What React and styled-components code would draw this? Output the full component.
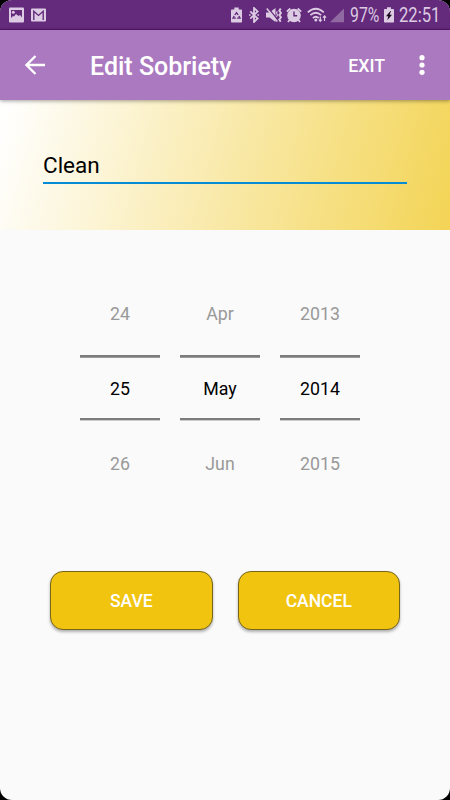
import React from "react";
import styled, { createGlobalStyle } from "styled-components";

const GlobalStyle = createGlobalStyle`
  * { box-sizing: border-box; }
  body { margin: 0; background: #000; font-family: Roboto, "Liberation Sans", sans-serif; }
`;

const Screen = styled.main`
  width: 450px;
  height: 800px;
  display: flex;
  flex-direction: column;
  overflow: hidden;
  border-radius: 12px;
  background: #fafafa;
`;

const StatusBar = styled.div`
  height: 30px;
  flex: none;
  display: flex;
  align-items: center;
  padding: 0 10px 0 9px;
  background: #642a7b;
  border-bottom: 1px solid #571468;
  color: #dccbe3;
`;

const Glyph = styled.svg`
  display: block;
  flex: none;
  width: ${(p) => p.$w}px;
  height: 16px;
  margin-left: ${(p) => p.$gap || 0}px;
`;

const Spacer = styled.div`
  flex: 1;
`;

const StatusText = styled.span`
  width: ${(p) => p.$w}px;
  margin-left: ${(p) => p.$gap}px;
  font-size: 20px;
  line-height: 28px;
  padding-top: 1px;
  white-space: nowrap;
  transform: scaleX(${(p) => p.$scale});
  transform-origin: left center;
`;

const AppBar = styled.header`
  height: 70px;
  flex: none;
  z-index: 1;
  display: flex;
  align-items: center;
  padding: 0 25px;
  background: #ab79bf;
  color: #fff;
  box-shadow: 0 1px 4px rgba(0, 0, 0, 0.38);
`;

const IconButton = styled.button`
  display: flex;
  padding: 0;
  border: 0;
  background: none;
  color: inherit;
`;

const Title = styled.h1`
  flex: 1;
  margin: 3px 0 0 45px;
  font-size: 25px;
  line-height: 30px;
  font-weight: 500;
`;

const ExitButton = styled.button`
  margin-right: 34px;
  padding: 2px 0 0;
  border: 0;
  background: none;
  color: inherit;
  font: 500 17.75px/22px Roboto, sans-serif;
`;

const NamePanel = styled.section`
  height: 130px;
  flex: none;
  padding: 46px 43px 0;
  background: linear-gradient(105deg, #fff 1%, #f3d455 100%);
`;

const NameInput = styled.input`
  display: block;
  width: 100%;
  height: 38px;
  padding: 2px 0 0;
  border: 0;
  border-bottom: 2px solid #068cd5;
  outline: 0;
  border-radius: 0;
  background: none;
  color: #000;
  font: 400 22.5px/34px Roboto, sans-serif;
`;

const DatePicker = styled.section`
  display: flex;
  padding-left: 80px;
  gap: 20px;
  margin-top: 46px;
`;

const Wheel = styled.div`
  width: 80px;
  display: flex;
  flex-direction: column;
  text-align: center;
  font-size: 17.75px;
`;

const Neighbour = styled.div`
  height: 79px;
  line-height: ${(p) => (p.$below ? "89px" : "76px")};
  color: #999;
`;

const Chosen = styled.div`
  height: 65px;
  border-top: 2px solid #7c7c7c;
  border-bottom: 2px solid #7c7c7c;
  box-shadow: inset 0 1px #9a9a9a, 0 1px #cdcdcd;
  line-height: 64px;
  color: #000;
`;

const Actions = styled.section`
  display: flex;
  padding-left: 50px;
  gap: 25px;
  margin-top: 72px;
`;

const ActionButton = styled.button`
  width: 162.5px;
  height: 59px;
  padding: 1px 0 0;
  border: 1px solid #76651b;
  border-radius: 13px;
  background: #f1c40f;
  box-shadow: 0 2px 3px rgba(0, 0, 0, 0.3);
  color: #fff;
  font: 500 17.5px/22px Roboto, sans-serif;
`;

const PictureIcon = () => (
  <Glyph $w={15} viewBox="0 0 15 16">
    <rect y=".5" width="15" height="15" rx="1" fill="currentColor" />
    <path d="M2 3h11v7.5l-2-2.5-1.500 1-2.500-2-2 2.500-1-.5-2 2Z" fill="#642a7b" />
    <circle cx="4.300" cy="5.200" r="1.500" fill="currentColor" />
  </Glyph>
);

const MailIcon = () => (
  <Glyph $w={15} $gap={7} viewBox="0 0 15 16">
    <rect y="1.500" width="15" height="13" rx="1" fill="currentColor" />
    <path d="M2.800 13V4.200l4.700 4.200 4.700-4.200V13" fill="none" stroke="#642a7b" strokeWidth="1.400" />
  </Glyph>
);

const RecycleBatteryIcon = () => (
  <Glyph $w={11} viewBox="0 0 10 16" preserveAspectRatio="none">
    <path d="M3 .5h4v2h2.200q.8 0 .8.800v11.400q0 .8-.8.800H.8q-.8 0-.8-.8V3.300q0-.8.800-.8H3Z" fill="currentColor" />
    <path d="M3.500 8 5 5.700 6.500 8M7.200 9l1 2.200H5.600M4.400 11.200H1.900l1-2.200" fill="none" stroke="#642a7b" strokeWidth="1.300" />
  </Glyph>
);

const BluetoothIcon = () => (
  <Glyph $w={10} $gap={6.5} viewBox="0 0 10 16">
    <path d="m1.300 4.300 7.300 7.300L5 15V1l3.600 3.400-7.300 7.300" fill="none" stroke="currentColor" strokeWidth="1.800" />
    <path d="M0 7.200h1.600v1.600H0zM8.400 7.200H10v1.600H8.400z" fill="currentColor" />
  </Glyph>
);

const MuteVibrateIcon = () => (
  <Glyph $w={16} $gap={7} viewBox="0 0 16 16">
    <path d="M0 5.500h3.500L9.500 1v14l-6-4.500H0Z" fill="currentColor" />
    <path d="m2.500 1.500 9 11" stroke="#642a7b" strokeWidth="1.300" />
    <path d="m.8 1.500 10.500 13" stroke="currentColor" strokeWidth="1.500" />
    <path d="M14.700 1.500 13.300 3.700l1.700 2.200-1.700 2.200 1.700 2.200-1.700 2.200 1.400 2.200" fill="none" stroke="currentColor" strokeWidth="1.900" />
    <path d="m11.300 4.200-.8 1.700 1 2-1 2" fill="none" stroke="currentColor" strokeWidth="1.100" />
  </Glyph>
);

const AlarmIcon = () => (
  <Glyph $w={16} $gap={4.5} viewBox="0 0 16 16">
    <circle cx="8" cy="8.500" r="6.800" fill="currentColor" />
    <path d="M.8 4.600 4.300 1.500M11.700 1.500l3.500 3.100M3.500 13 2 15M12.500 13l1.500 2" stroke="currentColor" strokeWidth="1.800" />
    <path d="M8 4.500v4.300h3.200" fill="none" stroke="#642a7b" strokeWidth="1.400" />
  </Glyph>
);

const WifiIcon = () => (
  <Glyph $w={20} $gap={4.5} viewBox="0 0 20 16">
    <path d="M.8 5.400q8-7.400 16 0M3.400 8.200q5.400-4.800 10.800 0M5.900 11q2.900-2.500 5.800 0" fill="none" stroke="currentColor" strokeWidth="1.800" />
    <circle cx="8.800" cy="13" r="1.500" fill="currentColor" />
    <path d="M13.300 9.500V14M11.800 12.700l1.500 1.700 1.500-1.700M17.500 14V9M15.900 10.700l1.600-1.800 1.600 1.800" fill="none" stroke="currentColor" strokeWidth="1.200" />
  </Glyph>
);

const SignalIcon = () => (
  <Glyph $w={14} $gap={3} viewBox="0 0 14 16">
    <path d="M14 1.500V15.200H0Z" fill="#9169a2" />
  </Glyph>
);

const ChargingBatteryIcon = () => (
  <Glyph $w={10} $gap={4} viewBox="0 0 10 16">
    <path d="M3 .3h4v1.800h2.300q.7 0 .7.700v12q0 .7-.7.700H.7q-.7 0-.7-.7v-12q0-.7.700-.7H3Z" fill="currentColor" />
    <path d="M6.500 4 2 9.200h2.300L3.300 13.300 8 7.800H5.600L7 4Z" fill="#17051d" />
  </Glyph>
);

const BackIcon = () => (
  <svg width="20" height="20" viewBox="0 0 20 20">
    <path d="M20 10H2M10.500 1 1.500 10l9 9" fill="none" stroke="currentColor" strokeWidth="2.300" />
  </svg>
);

const MoreIcon = () => (
  <svg width="6" height="20" viewBox="0 0 6 20">
    <circle cx="3" cy="2.700" r="2.600" fill="currentColor" />
    <circle cx="3" cy="10" r="2.600" fill="currentColor" />
    <circle cx="3" cy="17.300" r="2.600" fill="currentColor" />
  </svg>
);

const wheels = [
  ["24", "25", "26"],
  ["Apr", "May", "Jun"],
  ["2013", "2014", "2015"],
];

export default function App() {
  return (
    <>
      <GlobalStyle />
      <Screen>
        <StatusBar>
          <PictureIcon />
          <MailIcon />
          <Spacer />
          <RecycleBatteryIcon />
          <BluetoothIcon />
          <MuteVibrateIcon />
          <AlarmIcon />
          <WifiIcon />
          <SignalIcon />
          <StatusText $w={30} $gap={6.5} $scale={0.79}>97%</StatusText>
          <ChargingBatteryIcon />
          <StatusText $w={41} $gap={5} $scale={0.83}>22:51</StatusText>
        </StatusBar>
        <AppBar>
          <IconButton aria-label="Back"><BackIcon /></IconButton>
          <Title>Edit Sobriety</Title>
          <ExitButton>EXIT</ExitButton>
          <IconButton aria-label="More options"><MoreIcon /></IconButton>
        </AppBar>
        <NamePanel>
          <NameInput defaultValue="Clean" aria-label="Name" />
        </NamePanel>
        <DatePicker>
          {wheels.map(([before, current, after]) => (
            <Wheel key={current}>
              <Neighbour>{before}</Neighbour>
              <Chosen>{current}</Chosen>
              <Neighbour $below>{after}</Neighbour>
            </Wheel>
          ))}
        </DatePicker>
        <Actions>
          <ActionButton>SAVE</ActionButton>
          <ActionButton>CANCEL</ActionButton>
        </Actions>
      </Screen>
    </>
  );
}
